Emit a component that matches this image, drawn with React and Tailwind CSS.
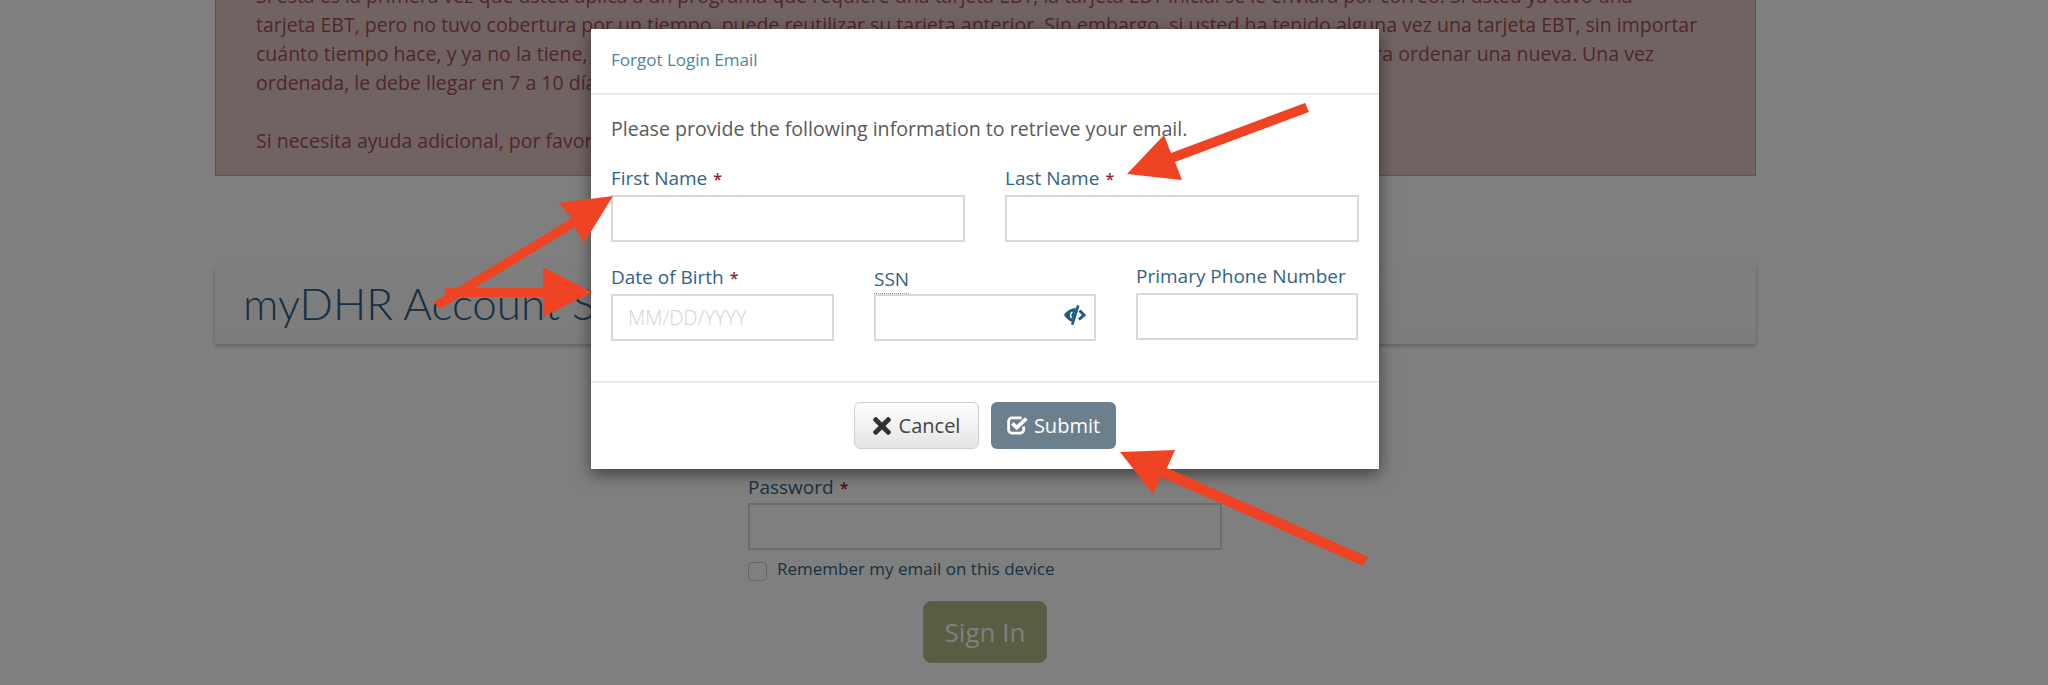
import React from "react";
import { FaTimes } from "react-icons/fa";

const font = { fontFamily: '"Open Sans", "Lato", sans-serif' };

function Star() {
  return <span className="ml-[6px] text-[16px] font-semibold text-[#94233a]">*</span>;
}

function Field({ label, req, w, ph, children, labelClass = "" }) {
  return (
    <div className={w}>
      <div className={"h-[24px] text-[19px] leading-[15px] text-[#336383] whitespace-nowrap " + labelClass}>
        {label}
        {req && <Star />}
      </div>
      <div className="relative h-[47px] border-2 border-[#d9d9d9] bg-white px-[15px] flex items-center text-[20px] font-light text-[#d4d4d4]">
        {ph}
        {children}
      </div>
    </div>
  );
}

function EyeIcon() {
  return (
    <svg className="absolute right-[8px] top-[9px]" width="22" height="20" viewBox="0 0 22 20">
      <path fill="#1f5a82" d="M0 10 C2.5 6 6 3.5 12 3 L8 17 C4.5 15.5 2 13 0 10Z" />
      <path fill="none" stroke="#fff" strokeWidth="1.4" d="M8.5 7 C6.5 8 6 11 7.5 13" />
      <polygon fill="#1f5a82" points="13,0 15.5,0.8 9.5,20 7,19.5" />
      <path fill="none" stroke="#1f5a82" strokeWidth="3" d="M15.5 5.5 L20 10 L15 14.5" />
    </svg>
  );
}

function CheckSquare() {
  return (
    <svg width="21" height="19" viewBox="0.5 1.5 19.5 17" fill="none" stroke="currentColor">
      <path strokeWidth="2.6" d="M16 11 v3 a3 3 0 0 1 -3 3 H5 a3 3 0 0 1 -3 -3 V6 a3 3 0 0 1 3 -3 h9" />
      <path strokeWidth="3.4" d="M5.5 8 l4 4 L18.5 3.5" />
    </svg>
  );
}

export default function App() {
  return (
    <div className="relative h-[685px] w-[2048px] overflow-hidden bg-white" style={font}>
      <div className="ml-[215px] -mt-[20px] h-[196px] w-[1541px] border border-[#d0a0a0] bg-[#e4c6c6] px-[40px] text-[19.5px] leading-[29px] text-[#9c5050] whitespace-nowrap">
        <div>Si esta es la primera vez que usted aplica a un programa que requiere una tarjeta EBT, la tarjeta EBT inicial se le enviará por correo. Si usted ya tuvo una</div>
        <div>tarjeta EBT, pero no tuvo cobertura por un tiempo, puede reutilizar su tarjeta anterior. Sin embargo, si usted ha tenido alguna vez una tarjeta EBT, sin importar</div>
        <div className="flex w-[1398px] justify-between">
          <span>cuánto tiempo hace, y ya no la tiene, usted debe llamar</span>
          <span>para ordenar una nueva. Una vez</span>
        </div>
        <div>ordenada, le debe llegar en 7 a 10 días.</div>
        <div className="h-[29px]"></div>
        <div>Si necesita ayuda adicional, por favor llame al servicio al cliente.</div>
      </div>

      <div className="ml-[215px] mt-[89px] h-[79px] w-[1541px] bg-gradient-to-b from-[#fdfdfd] to-[#f9f9f9] px-[28px] text-[44px] leading-[76px] font-light text-[#2a6188] shadow-[0_2px_4px_rgba(0,0,0,0.25)]" style={{ fontFamily: '"Lato", sans-serif' }}>
        myDHR Account Sign In
      </div>

      <div className="ml-[748px] mt-[134px] w-[474px]">
        <div className="h-[25px] text-[19px] leading-[19px] text-[#336383]">
          Password
          <Star />
        </div>
        <div className="h-[47px] border-2 border-[#d9d9d9] bg-white"></div>
        <div className="mt-[12px] flex items-center gap-[10px]">
          <div className="size-[19px] rounded-[4px] border border-[#c8c8c8] bg-white"></div>
          <span className="-mt-[5px] text-[17px] leading-[18px] text-[#336383]">Remember my email on this device</span>
        </div>
        <div className="mt-[20px] flex justify-center">
          <div className="flex h-[62px] w-[124px] items-center justify-center rounded-[8px] border border-[#bcc48c] bg-[#b2ba82] text-[26px] text-white">Sign In</div>
        </div>
      </div>

      <div className="absolute inset-0 bg-black/50"></div>

      <div className="absolute left-[591px] top-[29px] w-[788px] h-[440px] bg-white shadow-[0_5px_15px_rgba(0,0,0,0.5)] flex flex-col">
        <div className="h-[66px] border-b-2 border-[#e8e8e8] px-[20px] pt-[20px] text-[17px] leading-[22px] text-[#4f83a1]">Forgot Login Email</div>
        <div className="flex-1 px-[20px] pt-[21px]">
          <div className="text-[19.6px] leading-[26px] text-[#5a5a5a]">Please provide the following information to retrieve your email.</div>
          <div className="mt-[29px] flex gap-[40px]">
            <Field label="First Name" req w="w-[354px]" />
            <Field label="Last Name" req w="w-[354px]" />
          </div>
          <div className="mt-[28px] flex gap-[40px]">
            <Field label="Date of Birth" req w="w-[223px]" ph="MM/DD/YYYY" />
            <Field label={<span className="inline-block h-[22px] border-b border-dotted border-[#9a9a9a]">SSN</span>} w="w-[222px]" labelClass="pt-[2px]">
              <EyeIcon />
            </Field>
            <Field label="Primary Phone Number" w="w-[222px]" labelClass="-mt-[1px]" />
          </div>
        </div>
        <div className="h-[88px] border-t-2 border-[#e8e8e8] flex justify-center gap-[12px] pt-[19px]">
          <button className="flex h-[47px] w-[125px] items-center justify-center gap-[8px] rounded-[6px] border border-[#cfcfcf] bg-gradient-to-b from-white to-[#e4e4e4] text-[20px] text-[#444]">
            <FaTimes className="h-[26px] w-[18px] text-[#333]" />
            Cancel
          </button>
          <button className="flex h-[47px] w-[125px] items-center justify-center gap-[6px] rounded-[6px] bg-[#6b7f8c] text-[20px] text-white">
            <CheckSquare />
            Submit
          </button>
        </div>
      </div>

      <svg className="absolute inset-0 pointer-events-none" width="2048" height="685" viewBox="0 0 2048 685" fill="#ef4423">
        <polygon points="1305,103 1309,112 1175,162 1182,180 1127,174 1164,135 1171,153" />
        <polygon points="434,302 572,218 559,203 613,196 584,243 575,227 440,309" />
        <polygon points="445,288 543,288 543,267 592,292 543,317 543,297 445,297" />
        <polygon points="1368,557 1363,566 1161,477 1153,494 1120,452 1175,450 1167,468" />
      </svg>
    </div>
  );
}
